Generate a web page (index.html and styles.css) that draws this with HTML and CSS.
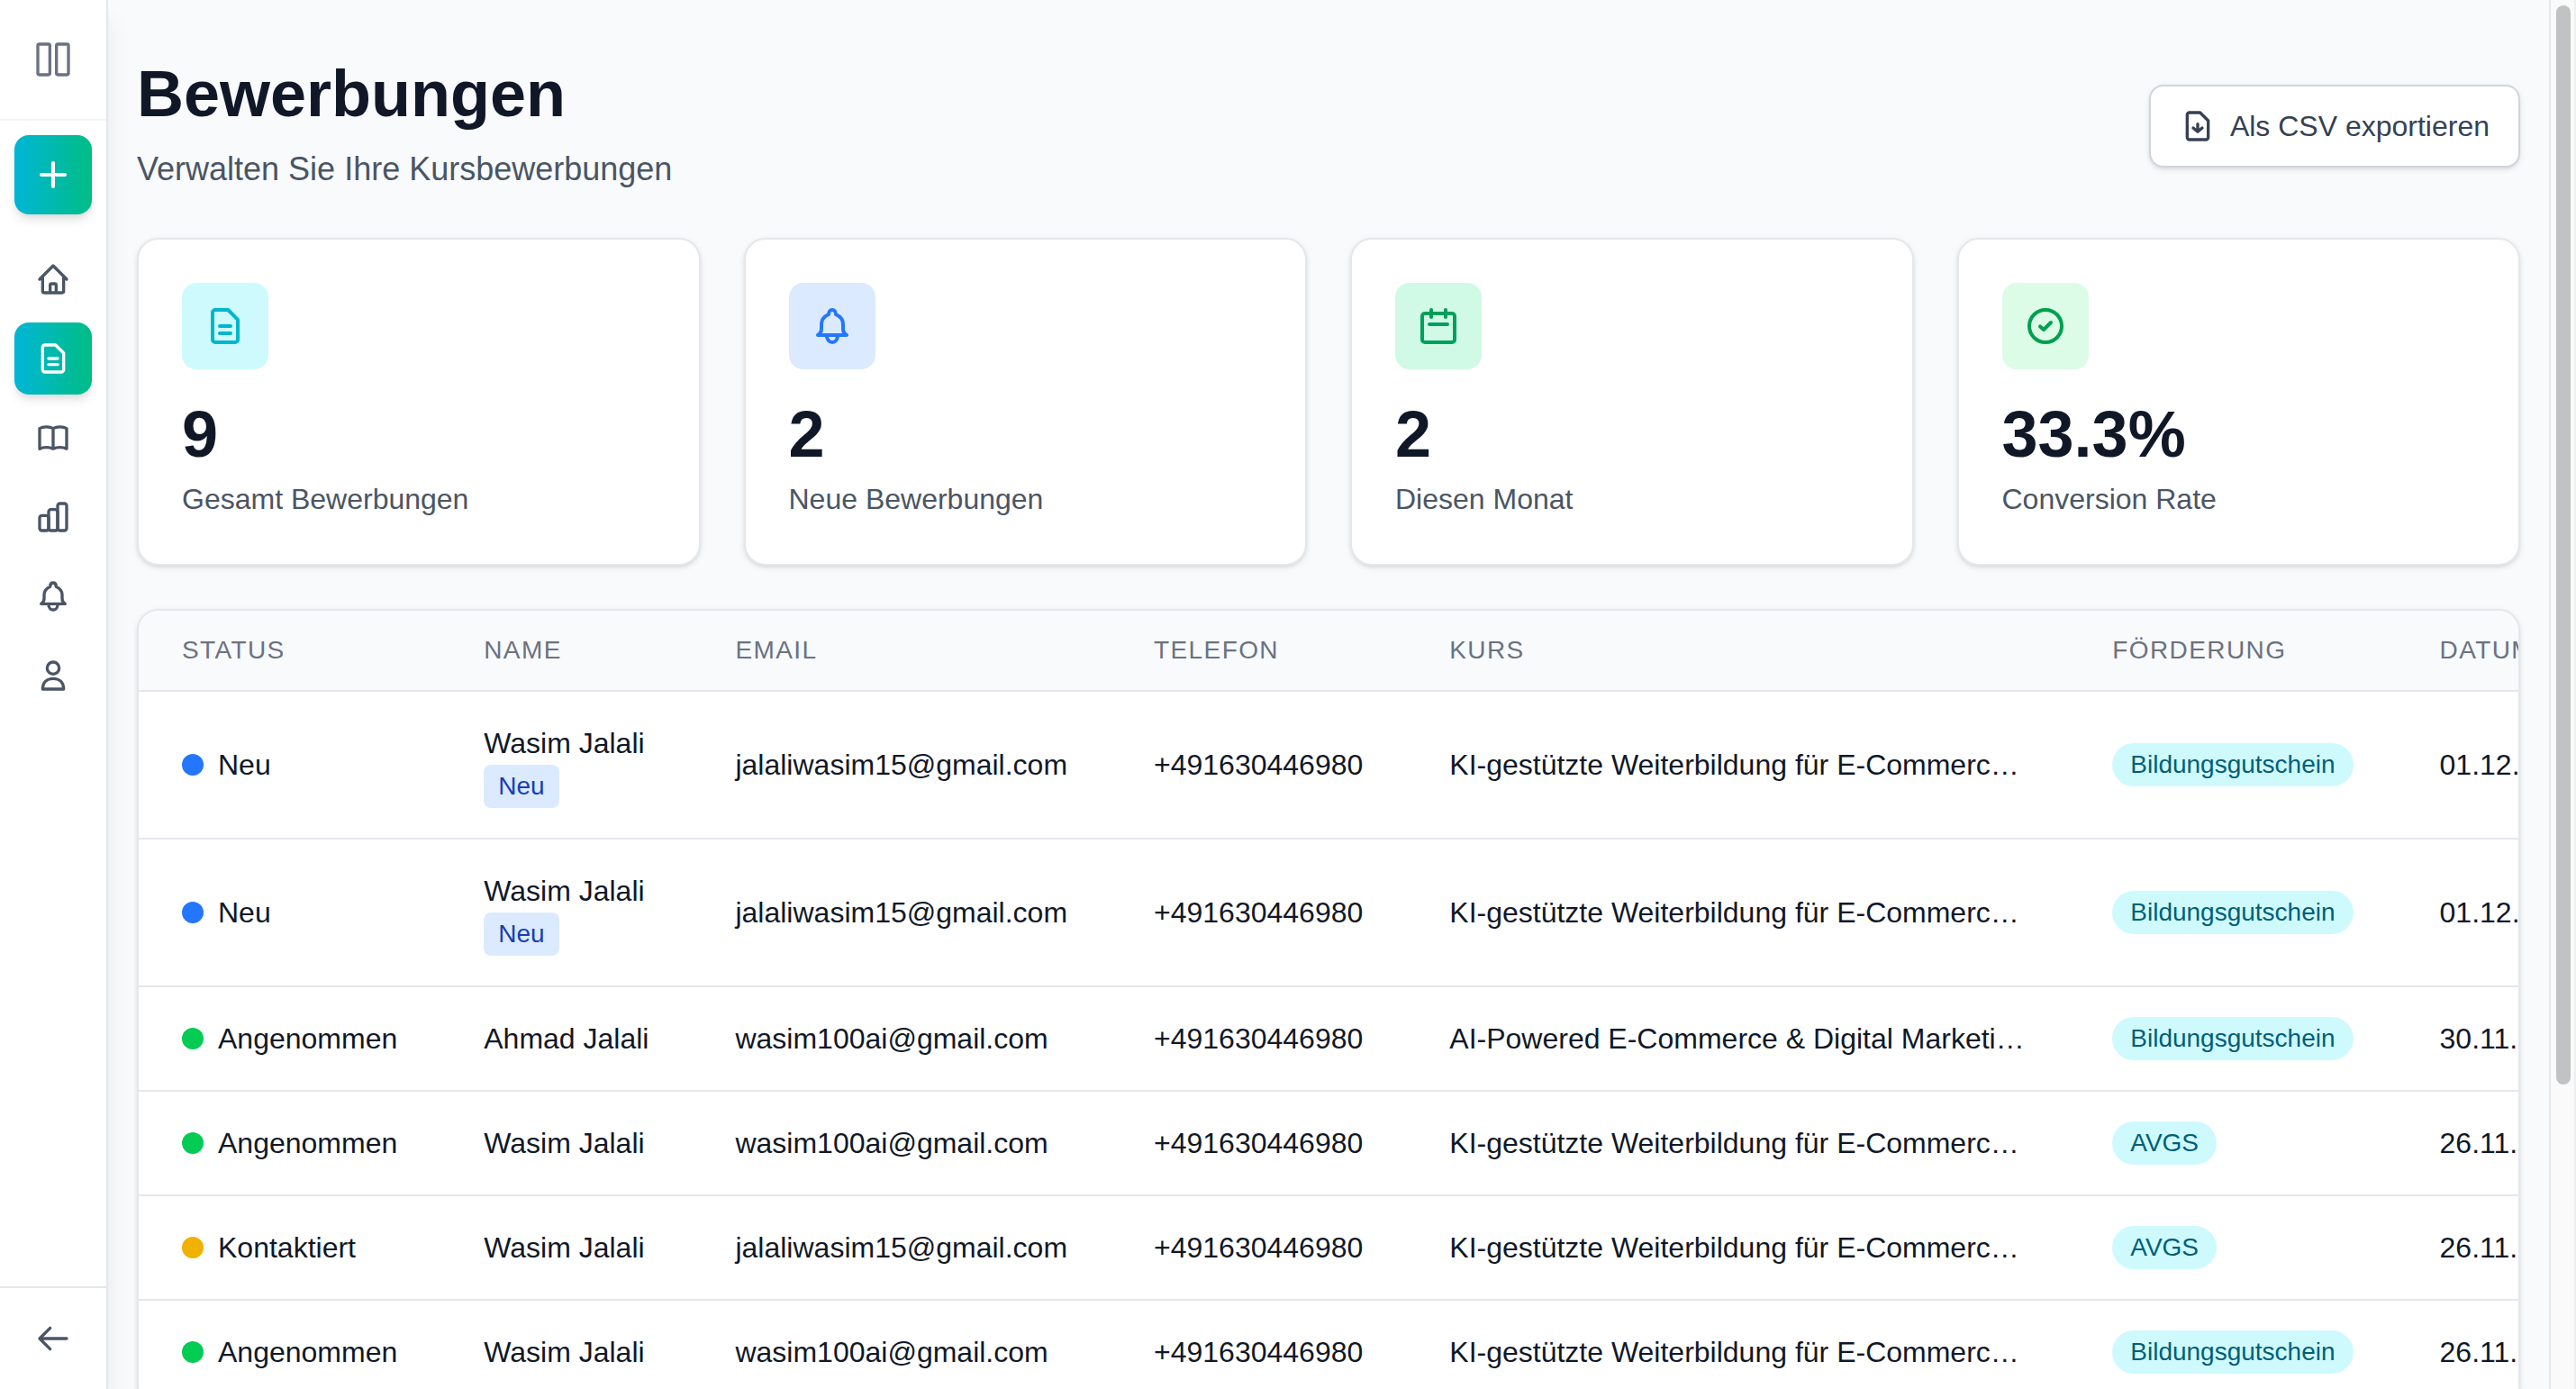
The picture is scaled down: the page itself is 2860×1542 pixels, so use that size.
FILE: index.html
```html
<!DOCTYPE html>
<html lang="de">
<head>
<meta charset="utf-8">
<meta name="viewport" content="width=device-width, initial-scale=1">
<title>Bewerbungen</title>
<link rel="stylesheet" href="styles.css">
</head>
<body>
<svg class="sprite" aria-hidden="true">
  <symbol id="i-doc" viewBox="0 0 24 24"><path d="M5 4.5A1.5 1.5 0 0 1 6.5 3h7.1L19 8.4v11.1a1.5 1.5 0 0 1-1.5 1.5h-11A1.5 1.5 0 0 1 5 19.5zM9 12h6M9 16h6"/></symbol>
  <symbol id="i-download" viewBox="0 0 24 24"><path d="M5 4.5A1.5 1.5 0 0 1 6.5 3h7.1L19 8.4v11.1a1.5 1.5 0 0 1-1.5 1.5h-11A1.5 1.5 0 0 1 5 19.5zM12 10.6v5M9 13.2l3 2.6 3-2.6"/></symbol>
  <symbol id="i-bell" viewBox="0 0 24 24"><path d="M4 17c1.3-.8 2-1.8 2-3.5V11c0-2.8 1.8-4.5 4-5.5C10 4 10.8 3 12 3s2 1 2 2.5c2.2 1 4 2.7 4 5.5v2.5c0 1.7.7 2.7 2 3.5zM9 17.5a3 3.5 0 0 0 6 0"/></symbol>
  <symbol id="i-calendar" viewBox="0 0 24 24"><rect x="3" y="5" width="18" height="16" rx="1.5"/><path d="M8 3v4M16 3v4M7 11h10"/></symbol>
  <symbol id="i-check" viewBox="0 0 24 24"><circle cx="12" cy="12" r="9"/><path d="M9 12.2l2 1.8 4-4"/></symbol>
  <symbol id="i-panels" viewBox="0 0 24 24"><rect x="1.8" y="1.8" width="8" height="20.4" rx="1"/><rect x="14.2" y="1.8" width="8" height="20.4" rx="1"/></symbol>
  <symbol id="i-plus" viewBox="0 0 24 24"><path d="M12 5.5v13M5.5 12h13"/></symbol>
  <symbol id="i-home" viewBox="0 0 24 24"><path d="M3 12l9-9 9 9M5 11v9a1 1 0 0 0 1 1h12a1 1 0 0 0 1-1v-9M10 21v-5a1 1 0 0 1 1-1h2a1 1 0 0 1 1 1v5"/></symbol>
  <symbol id="i-book" viewBox="0 0 24 24"><path d="M3 5.8C5.5 4.3 9.5 4.3 12 5.8c2.5-1.5 6.5-1.5 9 0v13.5c-2.5-1.3-6.5-1.3-9 0-2.5-1.3-6.5-1.3-9 0zM12 5.8v13.5"/></symbol>
  <symbol id="i-bars" viewBox="0 0 24 24"><rect x="3" y="11" width="6" height="10" rx="1.5"/><rect x="9" y="7" width="6" height="14" rx="1.5"/><rect x="15" y="3" width="6" height="18" rx="1.5"/></symbol>
  <symbol id="i-user" viewBox="0 0 24 24"><circle cx="12" cy="7" r="4"/><path d="M5 21c0-4.4 2.8-7 7-7s7 2.6 7 7z"/></symbol>
  <symbol id="i-back" viewBox="0 0 24 24"><path d="M21 12H3M10 5l-7 7 7 7"/></symbol>
</svg>

<div class="app">
  <aside class="sidebar">
    <div class="sidebar-head">
      <button class="toggle" type="button" aria-label="Seitenleiste umschalten"><svg class="icon"><use href="#i-panels"/></svg></button>
    </div>
    <div class="sidebar-body">
      <button class="create" type="button" aria-label="Neu erstellen"><svg class="icon icon-lg"><use href="#i-plus"/></svg></button>
      <nav class="nav">
        <a class="nav-link" href="#" aria-label="Start"><svg class="icon"><use href="#i-home"/></svg></a>
        <a class="nav-link active" href="#" aria-label="Bewerbungen" aria-current="page"><svg class="icon"><use href="#i-doc"/></svg></a>
        <a class="nav-link" href="#" aria-label="Kurse"><svg class="icon"><use href="#i-book"/></svg></a>
        <a class="nav-link" href="#" aria-label="Statistik"><svg class="icon"><use href="#i-bars"/></svg></a>
        <a class="nav-link" href="#" aria-label="Mitteilungen"><svg class="icon"><use href="#i-bell"/></svg></a>
        <a class="nav-link" href="#" aria-label="Profil"><svg class="icon"><use href="#i-user"/></svg></a>
      </nav>
    </div>
    <div class="sidebar-foot">
      <a class="nav-link" href="#" aria-label="Zurück"><svg class="icon"><use href="#i-back"/></svg></a>
    </div>
  </aside>

  <main class="main">
    <header class="page-head">
      <div>
        <h1>Bewerbungen</h1>
        <p class="subtitle">Verwalten Sie Ihre Kursbewerbungen</p>
      </div>
      <button class="export" type="button"><svg class="icon"><use href="#i-download"/></svg>Als CSV exportieren</button>
    </header>

    <section class="stats">
      <article class="card stat">
        <div class="tile cyan"><svg class="icon icon-lg"><use href="#i-doc"/></svg></div>
        <p class="value">9</p>
        <p class="label">Gesamt Bewerbungen</p>
      </article>
      <article class="card stat">
        <div class="tile blue"><svg class="icon icon-lg"><use href="#i-bell"/></svg></div>
        <p class="value">2</p>
        <p class="label">Neue Bewerbungen</p>
      </article>
      <article class="card stat">
        <div class="tile emerald"><svg class="icon icon-lg"><use href="#i-calendar"/></svg></div>
        <p class="value">2</p>
        <p class="label">Diesen Monat</p>
      </article>
      <article class="card stat">
        <div class="tile green"><svg class="icon icon-lg"><use href="#i-check"/></svg></div>
        <p class="value">33.3%</p>
        <p class="label">Conversion Rate</p>
      </article>
    </section>

    <section class="card table-card">
      <table>
        <thead>
          <tr><th class="col-status">Status</th><th>Name</th><th>Email</th><th>Telefon</th><th>Kurs</th><th>Förderung</th><th>Datum</th></tr>
        </thead>
        <tbody>
          <tr>
            <td><div class="status"><span class="dot new"></span>Neu</div></td>
            <td><div>Wasim Jalali</div><span class="tag">Neu</span></td>
            <td>jalaliwasim15@gmail.com</td>
            <td>+491630446980</td>
            <td><div class="course">KI-gestützte Weiterbildung für E-Commerce &amp; Digital Marketing</div></td>
            <td><span class="pill">Bildungsgutschein</span></td>
            <td>01.12.2025</td>
          </tr>
          <tr>
            <td><div class="status"><span class="dot new"></span>Neu</div></td>
            <td><div>Wasim Jalali</div><span class="tag">Neu</span></td>
            <td>jalaliwasim15@gmail.com</td>
            <td>+491630446980</td>
            <td><div class="course">KI-gestützte Weiterbildung für E-Commerce &amp; Digital Marketing</div></td>
            <td><span class="pill">Bildungsgutschein</span></td>
            <td>01.12.2025</td>
          </tr>
          <tr>
            <td><div class="status"><span class="dot accepted"></span>Angenommen</div></td>
            <td>Ahmad Jalali</td>
            <td>wasim100ai@gmail.com</td>
            <td>+491630446980</td>
            <td><div class="course">AI-Powered E-Commerce &amp; Digital Marketing</div></td>
            <td><span class="pill">Bildungsgutschein</span></td>
            <td>30.11.2025</td>
          </tr>
          <tr>
            <td><div class="status"><span class="dot accepted"></span>Angenommen</div></td>
            <td>Wasim Jalali</td>
            <td>wasim100ai@gmail.com</td>
            <td>+491630446980</td>
            <td><div class="course">KI-gestützte Weiterbildung für E-Commerce &amp; Digital Marketing</div></td>
            <td><span class="pill">AVGS</span></td>
            <td>26.11.2025</td>
          </tr>
          <tr>
            <td><div class="status"><span class="dot contacted"></span>Kontaktiert</div></td>
            <td>Wasim Jalali</td>
            <td>jalaliwasim15@gmail.com</td>
            <td>+491630446980</td>
            <td><div class="course">KI-gestützte Weiterbildung für E-Commerce &amp; Digital Marketing</div></td>
            <td><span class="pill">AVGS</span></td>
            <td>26.11.2025</td>
          </tr>
          <tr>
            <td><div class="status"><span class="dot accepted"></span>Angenommen</div></td>
            <td>Wasim Jalali</td>
            <td>wasim100ai@gmail.com</td>
            <td>+491630446980</td>
            <td><div class="course">KI-gestützte Weiterbildung für E-Commerce &amp; Digital Marketing</div></td>
            <td><span class="pill">Bildungsgutschein</span></td>
            <td>26.11.2025</td>
          </tr>
        </tbody>
      </table>
    </section>
  </main>

  <div class="scroll-track" aria-hidden="true"><div class="scroll-thumb"></div></div>
</div>
</body>
</html>
```

FILE: styles.css
```css
*,
*::before,
*::after {
  box-sizing: border-box;
}

body,
h1,
p {
  margin: 0;
}

body {
  background: #f9fafb;
  color: #101828;
  font-family: "Liberation Sans", Arial, sans-serif;
  font-size: 32px;
  line-height: 48px;
}

button {
  border: 0;
  font: inherit;
  cursor: pointer;
}

.sprite {
  display: none;
}

.icon {
  display: block;
  flex: none;
  width: 40px;
  height: 40px;
  fill: none;
  stroke: currentColor;
  stroke-width: 2;
  stroke-linecap: round;
  stroke-linejoin: round;
}

.icon-lg {
  width: 48px;
  height: 48px;
}

.app {
  display: grid;
  grid-template-columns: 120px minmax(0, 1fr) 30px;
  height: 100vh;
  overflow: hidden;
}

/* Sidebar */

.sidebar {
  z-index: 1;
  display: flex;
  flex-direction: column;
  background: #fff;
  border-right: 2px solid #e5e7eb;
  box-shadow: 0 20px 30px -6px rgb(0 0 0 / 10%), 0 8px 12px -8px rgb(0 0 0 / 10%);
}

.sidebar-head {
  display: grid;
  place-items: center;
  height: 134px;
  border-bottom: 2px solid #f3f4f6;
}

.toggle {
  padding: 16px;
  background: none;
  color: #6a7282;
}

.sidebar-body {
  flex: 1;
  display: flex;
  flex-direction: column;
  gap: 32px;
  padding: 16px;
}

.create,
.nav-link {
  display: grid;
  place-items: center;
  border-radius: 16px;
}

.create {
  height: 88px;
  padding: 0;
}

.nav {
  display: flex;
  flex-direction: column;
  gap: 8px;
}

.nav-link {
  height: 80px;
  color: #4a5565;
}

.create,
.nav-link.active {
  background: linear-gradient(to right, #00b6d6, #00bd84);
  color: #fff;
  box-shadow: 0 8px 12px -2px rgb(0 0 0 / 10%), 0 4px 8px -4px rgb(0 0 0 / 10%);
}

.sidebar-foot {
  padding: 16px;
  border-top: 2px solid #e5e7eb;
}

/* Main column */

.main {
  padding: 64px 32px;
  overflow-y: auto;
  scrollbar-width: none;
}

.page-head {
  display: flex;
  align-items: center;
  justify-content: space-between;
  margin-bottom: 48px;
}

h1 {
  font-size: 72px;
  line-height: 80px;
}

.subtitle {
  margin-top: 16px;
  color: #4a5565;
  font-size: 36px;
  line-height: 56px;
}

.export {
  display: flex;
  align-items: center;
  gap: 16px;
  padding: 20px 32px;
  background: #fff;
  color: #364153;
  border: 2px solid #d1d5dc;
  border-radius: 16px;
  box-shadow: 0 2px 6px rgb(0 0 0 / 10%), 0 2px 4px -2px rgb(0 0 0 / 10%);
}

.card {
  background: #fff;
  border: 2px solid #e5e7eb;
  border-radius: 24px;
  box-shadow: 0 2px 6px rgb(0 0 0 / 10%), 0 2px 4px -2px rgb(0 0 0 / 10%);
}

.stats {
  display: grid;
  grid-template-columns: repeat(4, minmax(0, 1fr));
  gap: 48px;
  margin-bottom: 48px;
}

.stat {
  padding: 48px;
}

.tile {
  display: grid;
  place-items: center;
  width: 96px;
  height: 96px;
  margin-bottom: 32px;
  border-radius: 16px;
}

.tile.cyan {
  background: #cefafe;
  color: #00b6cb;
}

.tile.blue {
  background: #dbeafe;
  color: #2476ff;
}

.tile.emerald {
  background: #d0fae5;
  color: #009f5c;
}

.tile.green {
  background: #dcfce7;
  color: #00a050;
}

.value {
  font-size: 72px;
  font-weight: 700;
  line-height: 80px;
}

.label {
  margin-top: 8px;
  color: #4a5565;
}

/* Applications table */

.table-card {
  overflow: hidden;
}

table {
  width: 100%;
  border-collapse: separate;
  border-spacing: 0;
  white-space: nowrap;
}

th {
  padding: 24px 48px;
  background: #f9fafb;
  border-bottom: 2px solid #e5e7eb;
  color: #6a7282;
  font-size: 28px;
  font-weight: 400;
  letter-spacing: 0.05em;
  line-height: 40px;
  text-align: left;
  text-transform: uppercase;
}

.col-status {
  min-width: 335px;
}

td {
  padding: 33px 48px;
  border-bottom: 2px solid #e5e7eb;
  vertical-align: middle;
}

.status {
  display: flex;
  align-items: center;
  gap: 16px;
}

.dot {
  width: 24px;
  height: 24px;
  border-radius: 50%;
}

.dot.new {
  background: #2476ff;
}

.dot.accepted {
  background: #04cb54;
}

.dot.contacted {
  background: #f0b100;
}

.tag,
.pill {
  display: block;
  width: fit-content;
  font-size: 28px;
  line-height: 40px;
}

.tag {
  padding: 4px 16px;
  background: #dbeafe;
  color: #193cb8;
  border-radius: 8px;
}

.pill {
  padding: 4px 20px;
  background: #cefafe;
  color: #005f78;
  border-radius: 24px;
}

.course {
  width: 640px;
  overflow: hidden;
  text-overflow: ellipsis;
}

/* Scroll indicator */

.scroll-track {
  padding: 6px 4px 0 6px;
  background: #fafafa;
  border-left: 2px solid #e8e8e8;
  border-right: 2px solid #efefef;
}

.scroll-thumb {
  width: 16px;
  height: 78%;
  background: #c1c2c3;
  border-radius: 8px;
}
```
